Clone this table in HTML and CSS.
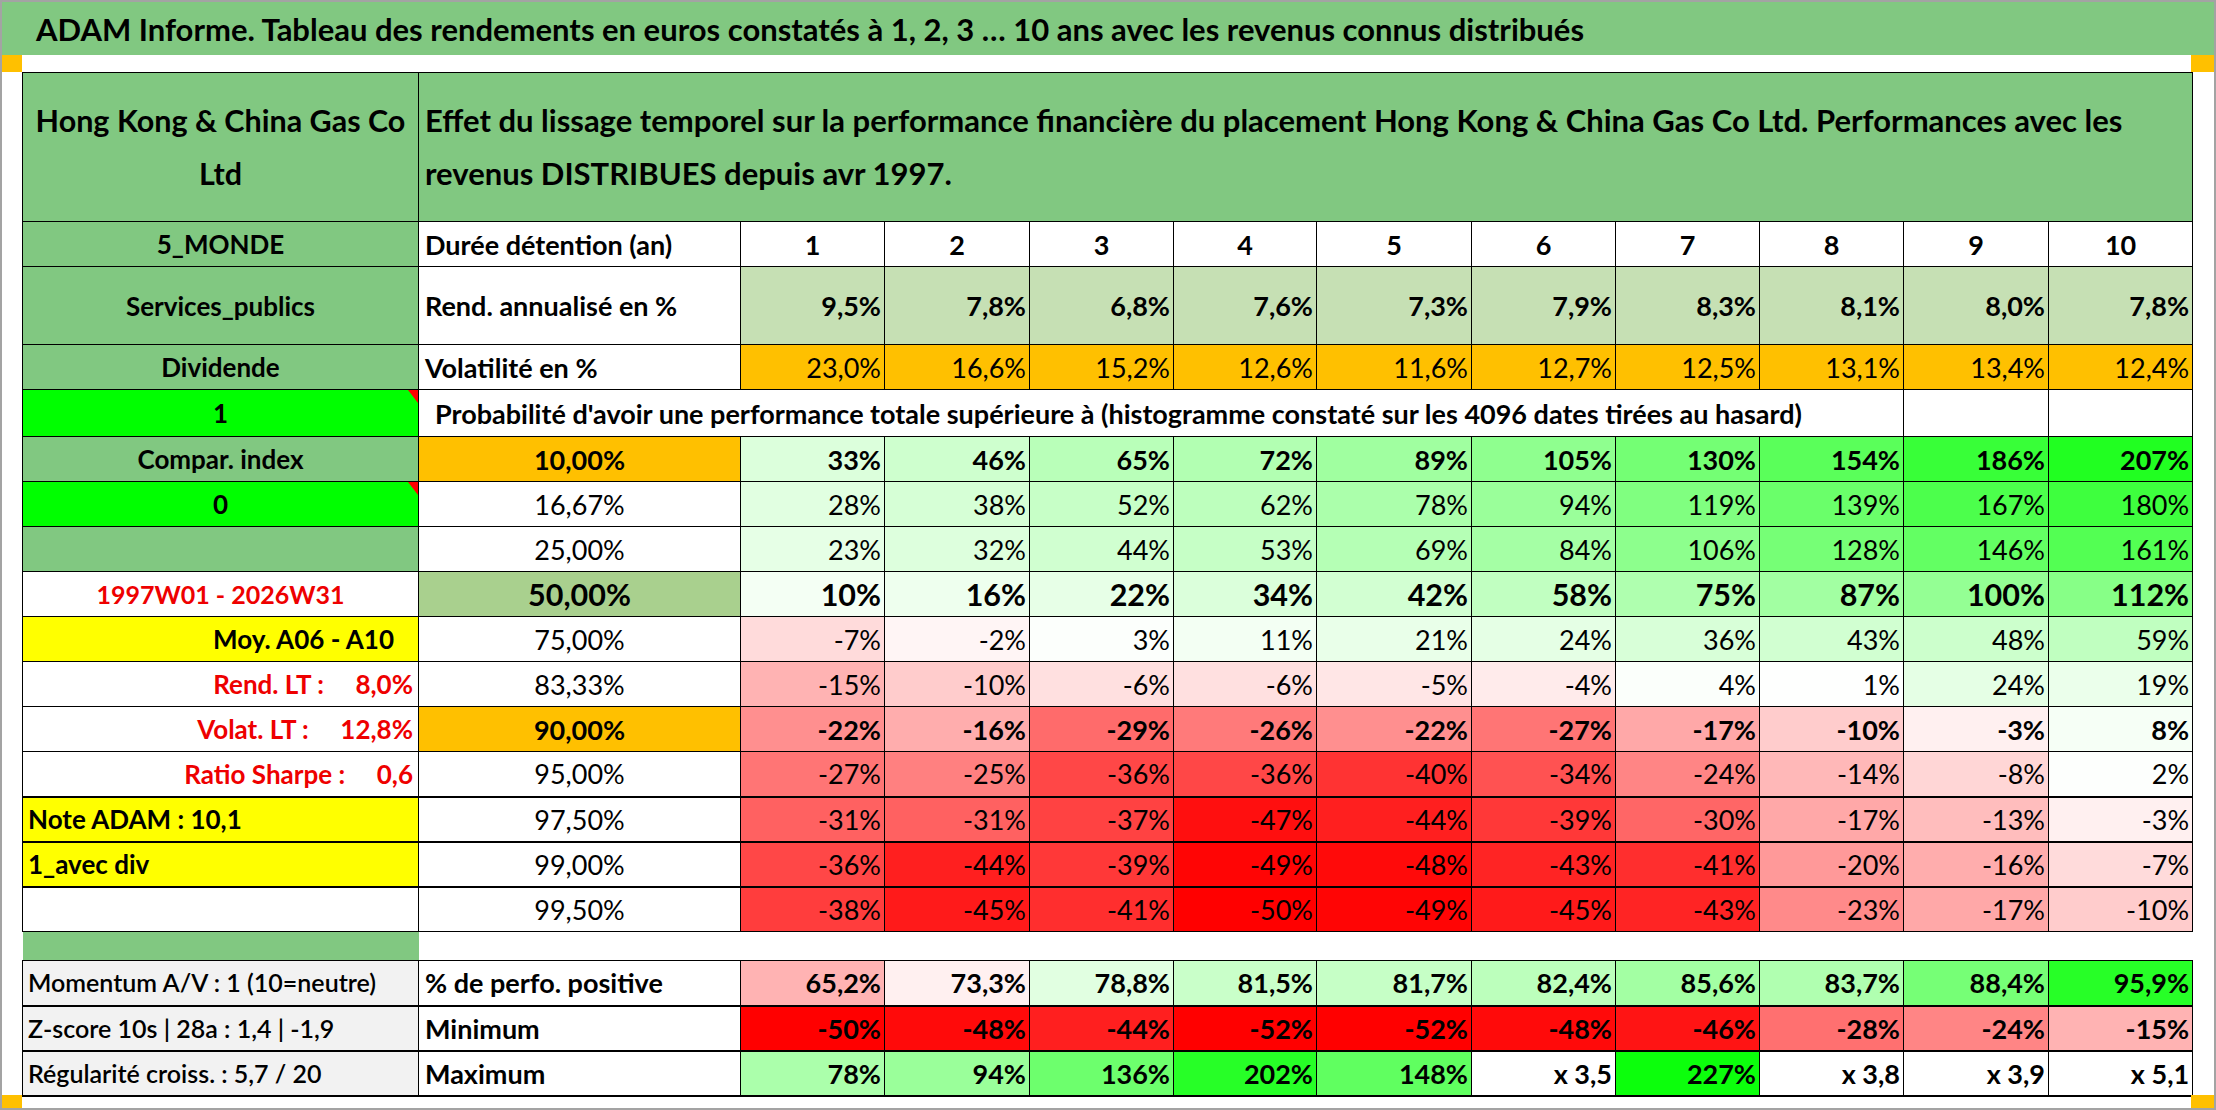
FILE: index.html
```html
<!DOCTYPE html>
<html lang="fr">
<head>
<meta charset="utf-8">
<title>ADAM Informe</title>
<link rel="stylesheet" href="styles.css">
</head>
<body>
<div class="sheet">
  <div class="title">ADAM Informe. Tableau des rendements en euros constatés à 1, 2, 3 … 10 ans avec les revenus connus distribués</div>
  <div class="strip"><span class="mark"></span><span class="mark mark-r"></span></div>
  <div class="body">
    <table class="grid">
      <colgroup>
        <col class="w-a"><col class="w-b">
        <col class="w-144"><col class="w-145"><col class="w-144"><col class="w-143"><col class="w-155">
        <col class="w-144"><col class="w-144"><col class="w-144"><col class="w-145"><col class="w-144">
      </colgroup>
      <tr class="row-head">
        <td class="g b c hd">Hong Kong &amp; China Gas Co<br>Ltd</td>
        <td colspan="11" class="g b l hd hd-b">Effet du lissage temporel sur la performance financière du placement Hong Kong &amp; China Gas Co Ltd. Performances avec les<br>revenus DISTRIBUES depuis avr 1997.</td>
      </tr>
      <tr class="row">
        <td class="g b c colA">5_MONDE</td>
        <td class="b lab">Durée détention (an)</td>
        <td class="b c">1</td><td class="b c">2</td><td class="b c">3</td><td class="b c">4</td><td class="b c">5</td>
        <td class="b c">6</td><td class="b c">7</td><td class="b c">8</td><td class="b c">9</td><td class="b c">10</td>
      </tr>
      <tr class="row-tall">
        <td class="g b c colA">Services_publics</td>
        <td class="b lab">Rend. annualisé en %</td>
        <td class="ol b r">9,5%</td><td class="ol b r">7,8%</td><td class="ol b r">6,8%</td><td class="ol b r">7,6%</td><td class="ol b r">7,3%</td>
        <td class="ol b r">7,9%</td><td class="ol b r">8,3%</td><td class="ol b r">8,1%</td><td class="ol b r">8,0%</td><td class="ol b r">7,8%</td>
      </tr>
      <tr class="row">
        <td class="g b c colA">Dividende</td>
        <td class="b lab">Volatilité en %</td>
        <td class="o r">23,0%</td><td class="o r">16,6%</td><td class="o r">15,2%</td><td class="o r">12,6%</td><td class="o r">11,6%</td>
        <td class="o r">12,7%</td><td class="o r">12,5%</td><td class="o r">13,1%</td><td class="o r">13,4%</td><td class="o r">12,4%</td>
      </tr>
      <tr class="row-prob">
        <td class="bg b c flag colA">1</td>
        <td colspan="9" class="b prob">Probabilité d'avoir une performance totale supérieure à (histogramme constaté sur les 4096 dates tirées au hasard)</td>
        <td></td><td></td>
      </tr>
      <tr class="row">
        <td class="g b c colA">Compar. index</td>
        <td class="o b c">10,00%</td>
        <td class="p b r" style="--v:33">33%</td><td class="p b r" style="--v:46">46%</td><td class="p b r" style="--v:65">65%</td><td class="p b r" style="--v:72">72%</td><td class="p b r" style="--v:89">89%</td>
        <td class="p b r" style="--v:105">105%</td><td class="p b r" style="--v:130">130%</td><td class="p b r" style="--v:154">154%</td><td class="p b r" style="--v:186">186%</td><td class="p b r" style="--v:207">207%</td>
      </tr>
      <tr class="row">
        <td class="bg b c flag colA">0</td>
        <td class="c">16,67%</td>
        <td class="p r" style="--v:28">28%</td><td class="p r" style="--v:38">38%</td><td class="p r" style="--v:52">52%</td><td class="p r" style="--v:62">62%</td><td class="p r" style="--v:78">78%</td>
        <td class="p r" style="--v:94">94%</td><td class="p r" style="--v:119">119%</td><td class="p r" style="--v:139">139%</td><td class="p r" style="--v:167">167%</td><td class="p r" style="--v:180">180%</td>
      </tr>
      <tr class="row">
        <td class="g"></td>
        <td class="c">25,00%</td>
        <td class="p r" style="--v:23">23%</td><td class="p r" style="--v:32">32%</td><td class="p r" style="--v:44">44%</td><td class="p r" style="--v:53">53%</td><td class="p r" style="--v:69">69%</td>
        <td class="p r" style="--v:84">84%</td><td class="p r" style="--v:106">106%</td><td class="p r" style="--v:128">128%</td><td class="p r" style="--v:146">146%</td><td class="p r" style="--v:161">161%</td>
      </tr>
      <tr class="row big">
        <td class="b c red small">1997W01 - 2026W31</td>
        <td class="o50 b c">50,00%</td>
        <td class="p b r" style="--v:10">10%</td><td class="p b r" style="--v:16">16%</td><td class="p b r" style="--v:22">22%</td><td class="p b r" style="--v:34">34%</td><td class="p b r" style="--v:42">42%</td>
        <td class="p b r" style="--v:58">58%</td><td class="p b r" style="--v:75">75%</td><td class="p b r" style="--v:87">87%</td><td class="p b r" style="--v:100">100%</td><td class="p b r" style="--v:112">112%</td>
      </tr>
      <tr class="row">
        <td class="y b r side moy">Moy. A06 - A10</td>
        <td class="c">75,00%</td>
        <td class="n r" style="--v:7">-7%</td><td class="n r" style="--v:2">-2%</td><td class="p r" style="--v:3">3%</td><td class="p r" style="--v:11">11%</td><td class="p r" style="--v:21">21%</td>
        <td class="p r" style="--v:24">24%</td><td class="p r" style="--v:36">36%</td><td class="p r" style="--v:43">43%</td><td class="p r" style="--v:48">48%</td><td class="p r" style="--v:59">59%</td>
      </tr>
      <tr class="row">
        <td class="b r red side">Rend. LT :     8,0%</td>
        <td class="c">83,33%</td>
        <td class="n r" style="--v:15">-15%</td><td class="n r" style="--v:10">-10%</td><td class="n r" style="--v:6">-6%</td><td class="n r" style="--v:6">-6%</td><td class="n r" style="--v:5">-5%</td>
        <td class="n r" style="--v:4">-4%</td><td class="p r" style="--v:4">4%</td><td class="p r" style="--v:1">1%</td><td class="p r" style="--v:24">24%</td><td class="p r" style="--v:19">19%</td>
      </tr>
      <tr class="row">
        <td class="b r red side">Volat. LT :     12,8%</td>
        <td class="o b c">90,00%</td>
        <td class="n b r" style="--v:22">-22%</td><td class="n b r" style="--v:16">-16%</td><td class="n b r" style="--v:29">-29%</td><td class="n b r" style="--v:26">-26%</td><td class="n b r" style="--v:22">-22%</td>
        <td class="n b r" style="--v:27">-27%</td><td class="n b r" style="--v:17">-17%</td><td class="n b r" style="--v:10">-10%</td><td class="n b r" style="--v:3">-3%</td><td class="p b r" style="--v:8">8%</td>
      </tr>
      <tr class="row tk">
        <td class="b r red side">Ratio Sharpe :     0,6</td>
        <td class="c">95,00%</td>
        <td class="n r" style="--v:27">-27%</td><td class="n r" style="--v:25">-25%</td><td class="n r" style="--v:36">-36%</td><td class="n r" style="--v:36">-36%</td><td class="n r" style="--v:40">-40%</td>
        <td class="n r" style="--v:34">-34%</td><td class="n r" style="--v:24">-24%</td><td class="n r" style="--v:14">-14%</td><td class="n r" style="--v:8">-8%</td><td class="p r" style="--v:2">2%</td>
      </tr>
      <tr class="row tk">
        <td class="y b l side">Note ADAM : 10,1</td>
        <td class="c">97,50%</td>
        <td class="n r" style="--v:31">-31%</td><td class="n r" style="--v:31">-31%</td><td class="n r" style="--v:37">-37%</td><td class="n r" style="--v:47">-47%</td><td class="n r" style="--v:44">-44%</td>
        <td class="n r" style="--v:39">-39%</td><td class="n r" style="--v:30">-30%</td><td class="n r" style="--v:17">-17%</td><td class="n r" style="--v:13">-13%</td><td class="n r" style="--v:3">-3%</td>
      </tr>
      <tr class="row tk">
        <td class="y b l side">1_avec div</td>
        <td class="c">99,00%</td>
        <td class="n r" style="--v:36">-36%</td><td class="n r" style="--v:44">-44%</td><td class="n r" style="--v:39">-39%</td><td class="n r" style="--v:49">-49%</td><td class="n r" style="--v:48">-48%</td>
        <td class="n r" style="--v:43">-43%</td><td class="n r" style="--v:41">-41%</td><td class="n r" style="--v:20">-20%</td><td class="n r" style="--v:16">-16%</td><td class="n r" style="--v:7">-7%</td>
      </tr>
      <tr class="row">
        <td></td>
        <td class="c">99,50%</td>
        <td class="n r" style="--v:38">-38%</td><td class="n r" style="--v:45">-45%</td><td class="n r" style="--v:41">-41%</td><td class="n r" style="--v:50">-50%</td><td class="n r" style="--v:49">-49%</td>
        <td class="n r" style="--v:45">-45%</td><td class="n r" style="--v:43">-43%</td><td class="n r" style="--v:23">-23%</td><td class="n r" style="--v:17">-17%</td><td class="n r" style="--v:10">-10%</td>
      </tr>
      <tr class="row-spacer">
        <td class="g spacer-a"></td>
        <td colspan="11" class="spacer-b"></td>
      </tr>
      <tr class="row tk">
        <td class="gr l side stat">Momentum A/V : 1 (10=neutre)</td>
        <td class="b lab">% de perfo. positive</td>
        <td class="n b r" style="--v:15">65,2%</td><td class="n b r" style="--v:3">73,3%</td><td class="p b r" style="--v:28">78,8%</td><td class="p b r" style="--v:50">81,5%</td><td class="p b r" style="--v:53">81,7%</td>
        <td class="p b r" style="--v:63">82,4%</td><td class="p b r" style="--v:86">85,6%</td><td class="p b r" style="--v:74">83,7%</td><td class="p b r" style="--v:128">88,4%</td><td class="p b r" style="--v:202">95,9%</td>
      </tr>
      <tr class="row tk">
        <td class="gr l side stat">Z-score 10s | 28a : 1,4 | -1,9</td>
        <td class="b lab">Minimum</td>
        <td class="n b r" style="--v:50">-50%</td><td class="n b r" style="--v:48">-48%</td><td class="n b r" style="--v:44">-44%</td><td class="n b r" style="--v:50">-52%</td><td class="n b r" style="--v:50">-52%</td>
        <td class="n b r" style="--v:48">-48%</td><td class="n b r" style="--v:46">-46%</td><td class="n b r" style="--v:28">-28%</td><td class="n b r" style="--v:24">-24%</td><td class="n b r" style="--v:15">-15%</td>
      </tr>
      <tr class="row tk">
        <td class="gr l side stat">Régularité croiss. : 5,7 / 20</td>
        <td class="b lab">Maximum</td>
        <td class="p b r" style="--v:78">78%</td><td class="p b r" style="--v:94">94%</td><td class="p b r" style="--v:136">136%</td><td class="p b r" style="--v:202">202%</td><td class="p b r" style="--v:148">148%</td>
        <td class="b r">x 3,5</td><td class="p b r" style="--v:227">227%</td><td class="b r">x 3,8</td><td class="b r">x 3,9</td><td class="b r">x 5,1</td>
      </tr>
    </table>
  </div>
  <div class="strip strip-b"><span class="mark"></span><span class="mark mark-r"></span></div>
</div>
</body>
</html>
```

FILE: styles.css
```css
html, body {
  margin: 0;
  padding: 0;
  background: #ffffff;
}

.sheet {
  width: 2216px;
  height: 1110px;
  box-sizing: border-box;
  border: 2px solid #a3a3a3;
  display: flex;
  flex-direction: column;
  font-family: Lato, "Open Sans", sans-serif;
  color: #000;
  overflow: hidden;
}

.title {
  height: 53px;
  flex: none;
  background: #81c881;
  display: flex;
  align-items: center;
  padding-left: 34px;
  font-size: 31px;
  font-weight: 700;
  white-space: nowrap;
}

.strip {
  height: 17px;
  flex: none;
  display: flex;
  justify-content: space-between;
}

.strip-b {
  height: 13px;
}

.mark {
  width: 20px;
  background: #ffc000;
}

.mark-r {
  width: 23px;
}

.body {
  flex: none;
  height: 1023px;
  padding-left: 20px;
}

.grid {
  border-collapse: collapse;
  table-layout: fixed;
  width: 2170px;
}

.w-a { width: 396px; }
.w-b { width: 322px; }
.w-143 { width: 143px; }
.w-144 { width: 144px; }
.w-145 { width: 145px; }
.w-155 { width: 155px; }

.grid td {
  border: 1px solid #000;
  padding: 0 3px;
  font-size: 27px;
  line-height: 1;
  white-space: nowrap;
  vertical-align: middle;
  overflow: visible;
}

.row-head { height: 149px; }
.row { height: 45px; }
.row-tall { height: 78px; }
.row-prob { height: 47px; }
.row-spacer { height: 29px; }

.grid tr.tk td {
  border-bottom: 2px solid #000;
}

.grid td.hd {
  font-size: 30.5px;
  line-height: 53px;
}

.grid td.hd-b {
  padding-left: 6px;
  font-size: 31px;
}

.grid td.colA {
  font-size: 26px;
}

.b { font-weight: 700; }
.c { text-align: center; }
.r { text-align: right; }
.l { text-align: left; }

.grid td.lab {
  padding-left: 6px;
  text-align: left;
}

.grid td.side {
  padding-left: 5px;
  padding-right: 5px;
  white-space: pre;
  font-size: 26px;
}

.grid td.moy {
  padding-right: 24px;
}

.grid td.stat {
  font-size: 25px;
  font-weight: 600;
}

.grid td.prob {
  padding-left: 16px;
  text-align: left;
}

.red { color: #ee0000; }

.g { background: #81c881; }
.bg { background: #00ff00; }
.y { background: #ffff00; }
.gr { background: #f2f2f2; }
.o { background: #ffc000; }
.ol { background: #c6e0b4; }
.o50 { background: #a9d08e; }

.p { background-color: color-mix(in srgb, #00ff00 calc(var(--v) * 0.42%), #ffffff); }
.n { background-color: color-mix(in srgb, #ff0000 calc(var(--v) * 2%), #ffffff); }

.grid tr.big td {
  font-size: 30.5px;
}

.grid tr.big td.small {
  font-size: 25px;
}

.flag {
  position: relative;
}

.flag::after {
  content: "";
  position: absolute;
  top: 0;
  right: 0;
  border-top: 13px solid #ff0000;
  border-left: 10px solid transparent;
}

.grid td.spacer-a {
  border-left: none;
  border-right: none;
}

.grid td.spacer-b {
  border-left: none;
  border-right: none;
}
```
